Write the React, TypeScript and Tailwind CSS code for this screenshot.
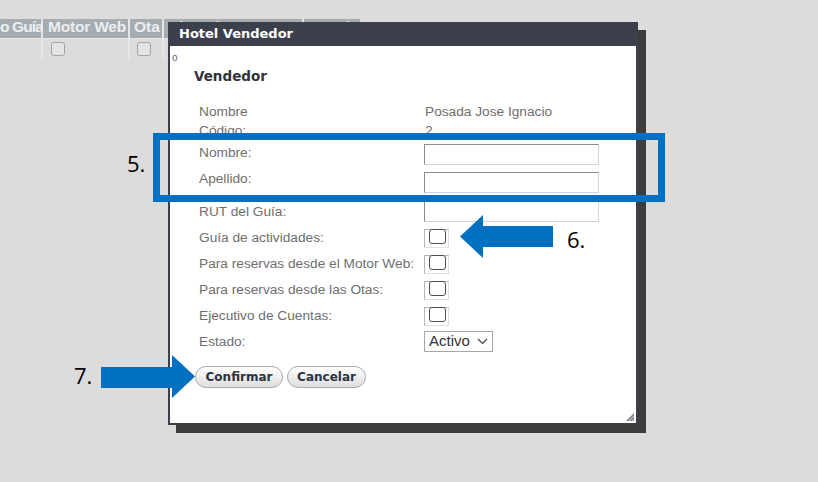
import React from 'react';

const sans = { fontFamily: '"Liberation Sans", Arial, sans-serif' };
const verdana = { fontFamily: '"DejaVu Sans", Verdana, sans-serif' };
const callout = { fontFamily: '"Open Sans", "Noto Sans", sans-serif' };

const TextInput = () => (
  <span className="block w-[175px] h-[21px] border border-t-[#8c8c8c] border-l-[#8c8c8c] border-r-[#d4d4d4] border-b-[#d4d4d4] bg-white" />
);

const Check = () => (
  <span className="relative block w-[25px] h-[19px] border border-t-[#b5b5b5] border-l-[#b5b5b5] border-r-[#e0e0e0] border-b-[#e0e0e0] bg-white">
    <span className="absolute left-[4px] top-[-1px] w-[17px] h-[15px] rounded-[3px] border border-[#4f4f4f] bg-white" />
  </span>
);

const Field = ({ label, className, labelClass, children }: { label: string; className: string; labelClass: string; children?: React.ReactNode }) => (
  <div className={`flex items-start ${className}`}>
    <div className={`w-[225px] shrink-0 text-[13.7px] text-[#6e6e6e] whitespace-nowrap ${labelClass}`}>{label}</div>
    {children}
  </div>
);

const BackgroundTable = () => (
  <div className="pt-[15px] bg-[#dcdcdc]" style={sans}>
    <div className="inline-flex flex-col gap-[1px] bg-[#e6e6e6]">
      <div className="flex gap-[2px] h-[19px] text-[15.5px] font-bold text-[#eceeef] leading-[15px]">
        <div className="w-[41px] bg-[#a5adb3] whitespace-nowrap tracking-[-0.9px]">o Guía</div>
        <div className="w-[85px] bg-[#a5adb3] pl-[5px] whitespace-nowrap tracking-[-0.2px]">Motor Web</div>
        <div className="w-[32px] bg-[#a5adb3] pl-[4px]">Ota</div>
        <div className="w-[138px] bg-[#a5adb3] pl-[5px] whitespace-nowrap">Ejecutivo Cuentas</div>
        <div className="w-[56px] bg-[#a5adb3] pl-[4px]">Estado</div>
      </div>
      <div className="flex gap-[2px] h-[20px]">
        <div className="w-[41px] bg-[#dcdcdc]" />
        <div className="w-[85px] bg-[#dcdcdc] pl-[8px] pt-[3px]">
          <span className="block w-[14px] h-[14px] rounded-[3px] border border-[#a3a3a3] bg-[#e4e4e4]" />
        </div>
        <div className="w-[32px] bg-[#dcdcdc] pl-[7px] pt-[3px]">
          <span className="block w-[14px] h-[14px] rounded-[3px] border border-[#a3a3a3] bg-[#e4e4e4]" />
        </div>
        <div className="w-[138px] bg-[#dcdcdc]" />
        <div className="w-[56px] bg-[#dcdcdc]" />
      </div>
    </div>
  </div>
);

const Dialog = () => (
  <div className="absolute left-[168px] top-[22px] w-[470px] h-[403px] flex flex-col bg-[#3b404c] px-[2px] pb-[2px] shadow-[8px_8px_0_#3d3d3d]">
    <div className="h-[24px] shrink-0 flex items-center pl-[9px] text-[13px] font-bold text-white" style={verdana}>
      Hotel Vendedor
    </div>
    <div className="relative flex-1 bg-white flex flex-col pt-[5px]">
      <div className="h-[14px] pl-[2px] text-[10px] leading-[14px] text-[#666]" style={sans}>o</div>
      <div className="mt-[2px] h-[18px] pl-[24px] text-[13.5px] leading-[18px] font-bold text-[#2f333b]" style={verdana}>
        Vendedor
      </div>
      <div className="pl-[29px] flex flex-col" style={sans}>
        <Field label="Nombre" className="mt-[17px] h-[19px]" labelClass="leading-[19px]">
          <span className="text-[13.7px] leading-[19px] text-[#6e6e6e] ml-[1px]">Posada Jose Ignacio</span>
        </Field>
        <Field label="Código:" className="h-[19px]" labelClass="leading-[19px]">
          <span className="text-[13.7px] leading-[19px] text-[#6e6e6e] ml-[1px]">2</span>
        </Field>
        <Field label="Nombre:" className="mt-[4px] h-[21px]" labelClass="leading-[17px]">
          <TextInput />
        </Field>
        <Field label="Apellido:" className="mt-[7px] h-[21px]" labelClass="leading-[14px]">
          <TextInput />
        </Field>
        <Field label="RUT del Guía:" className="mt-[8px] h-[20px]" labelClass="leading-[21px]">
          <TextInput />
        </Field>
        <Field label="Guía de actividades:" className="mt-[8px] h-[19px]" labelClass="leading-[17px]">
          <Check />
        </Field>
        <Field label="Para reservas desde el Motor Web:" className="mt-[7px] h-[19px]" labelClass="leading-[17px]">
          <Check />
        </Field>
        <Field label="Para reservas desde las Otas:" className="mt-[7px] h-[19px]" labelClass="leading-[17px]">
          <Check />
        </Field>
        <Field label="Ejecutivo de Cuentas:" className="mt-[7px] h-[19px]" labelClass="leading-[17px]">
          <Check />
        </Field>
        <Field label="Estado:" className="mt-[5px] h-[21px]" labelClass="leading-[21px]">
          <span className="flex items-center w-[69px] h-[21px] border border-[#a6a6a6] bg-white pl-[4px] text-[15px] text-[#333]">
            Activo
            <svg className="ml-[7px]" width="11" height="7" viewBox="0 0 11 7">
              <path d="M1 1l4.5 4.5L10 1" fill="none" stroke="#444" strokeWidth="1.2" />
            </svg>
          </span>
        </Field>
      </div>
      <div className="mt-[14px] pl-[25px] flex gap-[4px]" style={verdana}>
        <button className="w-[88px] h-[22px] rounded-full border border-[#a9a9a9] bg-gradient-to-b from-white to-[#dedede] text-[12px] font-bold text-[#2f333b] shadow-[inset_0_1px_0_#fff]">
          Confirmar
        </button>
        <button className="w-[79px] h-[22px] rounded-full border border-[#a9a9a9] bg-gradient-to-b from-white to-[#dedede] text-[12px] font-bold text-[#2f333b] shadow-[inset_0_1px_0_#fff]">
          Cancelar
        </button>
      </div>
      <svg className="absolute right-[2px] bottom-[2px]" width="8" height="8" viewBox="0 0 8 8">
        <path d="M8 0L0 8h8z" fill="#8a8a8a" />
        <path d="M8 3L3 8M8 6L6 8" stroke="#d0d0d0" strokeWidth="0.8" />
      </svg>
    </div>
  </div>
);

export default function App() {
  return (
    <div className="relative w-[818px] h-[482px] overflow-hidden bg-[#dcdcdc]">
      <BackgroundTable />
      <Dialog />

      {/* annotations */}
      <div className="absolute left-[153px] top-[133px] w-[512px] h-[69px] border-[7px] border-[#0070c0]" />
      <div className="absolute left-[127px] top-[148px] text-[22px] leading-[30px] text-black" style={callout}>5.</div>

      <svg className="absolute left-[460px] top-[215px]" width="93" height="43" viewBox="0 0 93 43">
        <polygon points="0,21.5 23,0 23,11 93,11 93,32 23,32 23,43" fill="#0070c0" />
      </svg>
      <div className="absolute left-[567px] top-[224px] text-[22px] leading-[30px] text-black" style={callout}>6.</div>

      <svg className="absolute left-[101px] top-[355px]" width="94" height="43" viewBox="0 0 94 43">
        <polygon points="0,12 71,12 71,0 94,21.5 71,43 71,33 0,33" fill="#0070c0" />
      </svg>
      <div className="absolute left-[74px] top-[360px] text-[22px] leading-[30px] text-black" style={callout}>7.</div>
    </div>
  );
}
